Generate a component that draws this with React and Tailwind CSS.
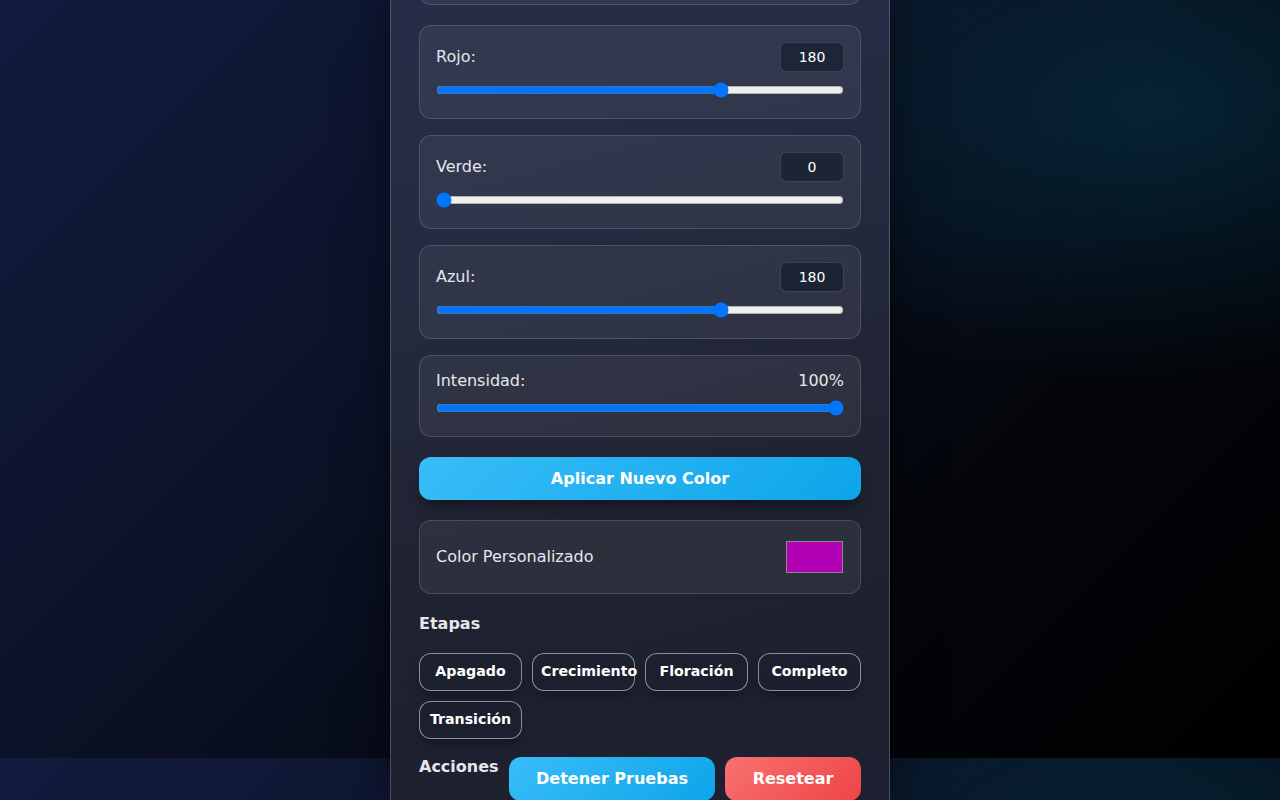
import React from 'react';

// ─── Data ────────────────────────────────────────────────────────────────────
const channels = [
    { label: 'Rojo:', value: 180 },
    { label: 'Verde:', value: 0 },
    { label: 'Azul:', value: 180 },
];

const stages = ['Apagado', 'Crecimiento', 'Floración', 'Completo', 'Transición'];

// ─── ChannelCard ─────────────────────────────────────────────────────────────
function ChannelCard({ label, value }) {
    return (
        <div className="rounded-xl border border-white/15 bg-white/[0.06] p-4">
            <div className="flex items-center justify-between h-[30px]">
                <span className="text-base text-[#e5e7eb]">{label}</span>
                <div className="w-16 h-[30px] rounded-md border border-white/15 bg-[#0f1a2a]/60 flex items-center justify-center text-sm text-white">
                    {value}
                </div>
            </div>
            <input
                type="range"
                min={0}
                max={255}
                defaultValue={value}
                className="block w-full h-4 mt-[10px] mb-1 cursor-pointer"
            />
        </div>
    );
}

export default function App() {
    return (
        <div className="h-screen overflow-hidden flex justify-center font-['DejaVu_Sans',sans-serif] bg-[radial-gradient(ellipse_at_90%_14%,rgba(6,44,64,0.75)_0%,rgba(6,44,64,0)_30%),linear-gradient(135deg,#111b3e_0%,#0b1226_40%,#04060c_70%,#000000_100%)] bg-[length:100%_758px] bg-repeat-y">
            <div className="w-[500px] shrink-0 border-x border-white/20 bg-[linear-gradient(165deg,#262d47_0%,#242a3e_35%,#1f2230_65%,#1d2030_100%)] shadow-[0_0_40px_rgba(0,0,0,0.5)] px-7">
                {/* card above the fold, scrolled out */}
                <div className="-mt-[89px] h-[94px] rounded-xl border border-white/15 bg-white/[0.06]" />

                <div className="flex flex-col gap-4 mt-5">
                    {channels.map(c => (
                        <ChannelCard key={c.label} label={c.label} value={c.value} />
                    ))}

                    <div className="rounded-xl border border-white/15 bg-white/[0.06] p-4">
                        <div className="flex items-center justify-between h-[18px] leading-[18px]">
                            <span className="text-base text-[#e5e7eb]">Intensidad:</span>
                            <span className="text-base text-[#e5e7eb]">100%</span>
                        </div>
                        <input
                            type="range"
                            min={0}
                            max={100}
                            defaultValue={100}
                            className="block w-full h-4 mt-[10px] mb-1 cursor-pointer"
                        />
                    </div>
                </div>

                <button className="mt-5 w-full h-[43px] rounded-xl bg-[linear-gradient(135deg,#38bdf8,#0ea5e9)] text-white font-bold text-base shadow-lg shadow-black/30">
                    Aplicar Nuevo Color
                </button>

                <div className="mt-5 rounded-xl border border-white/15 bg-white/[0.06] p-4">
                    <div className="flex items-center justify-between h-10">
                        <span className="text-base text-[#e5e7eb]">Color Personalizado</span>
                        <div className="w-[57px] h-[32px] border border-[#8a8a8a] bg-[#b400b4] mr-[1px]" />
                    </div>
                </div>

                <h3 className="mt-[18px] mb-[17px] text-base font-bold leading-6 text-[#e5e7eb]">Etapas</h3>

                <div className="grid grid-cols-4 gap-[10px]">
                    {stages.map(s => (
                        <button
                            key={s}
                            className="h-[38px] rounded-xl border border-white/50 bg-black/5 px-2 text-[14.2px] font-bold text-white text-center whitespace-nowrap overflow-visible shadow-lg shadow-black/25"
                        >
                            {s}
                        </button>
                    ))}
                </div>

                <div className="mt-[18px] flex items-start gap-[10px]">
                    <h3 className="mt-[1px] text-base font-bold leading-[18px] text-[#e5e7eb] w-[80px]">Acciones</h3>
                    <button className="w-[206px] h-11 rounded-xl bg-[linear-gradient(135deg,#38bdf8,#0ea5e9)] text-white font-bold text-base">
                        Detener Pruebas
                    </button>
                    <button className="w-[136px] h-11 rounded-xl bg-[linear-gradient(135deg,#f87171,#ef4444)] text-white font-bold text-base">
                        Resetear
                    </button>
                </div>
            </div>
        </div>
    );
}
